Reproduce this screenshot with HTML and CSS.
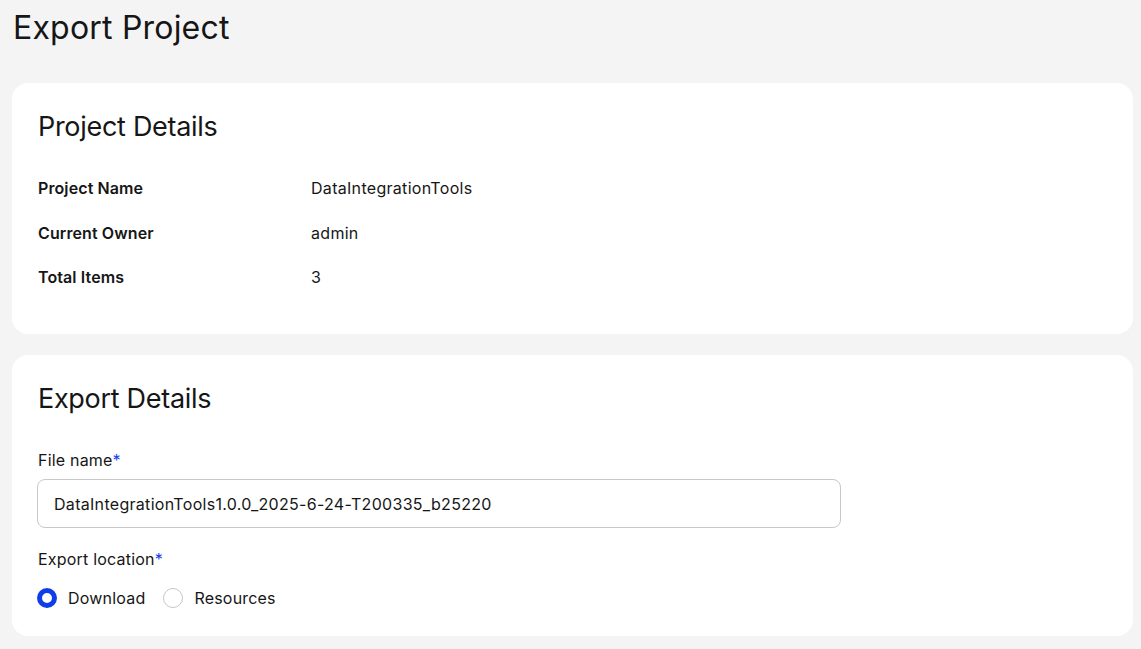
FILE: index.html
```html
<!DOCTYPE html>
<html>
<head>
<meta charset="utf-8">
<link rel="stylesheet" href="styles.css">
</head>
<body>
<div class="page">
  <h1 class="page-title">Export Project</h1>
  <section class="card">
    <h2 class="card-title">Project Details</h2>
    <div class="details">
      <div class="detail-row"><span class="detail-label">Project Name</span><span class="detail-value">DataIntegrationTools</span></div>
      <div class="detail-row"><span class="detail-label">Current Owner</span><span class="detail-value">admin</span></div>
      <div class="detail-row"><span class="detail-label">Total Items</span><span class="detail-value">3</span></div>
    </div>
  </section>
  <section class="card card-export">
    <h2 class="card-title">Export Details</h2>
    <div class="field">
      <label class="field-label">File name<span class="req">*</span></label>
      <div class="text-input">DataIntegrationTools1.0.0_2025-6-24-T200335_b25220</div>
    </div>
    <div class="field field-radio">
      <label class="field-label">Export location<span class="req">*</span></label>
      <div class="radio-group">
        <span class="radio"><span class="radio-dot checked"></span>Download</span>
        <span class="radio"><span class="radio-dot"></span>Resources</span>
      </div>
    </div>
  </section>
</div>
</body>
</html>
```

FILE: styles.css
```css
* { box-sizing: border-box; }
html, body { margin: 0; padding: 0; }
body {
  background: #f4f4f4;
  font-family: Inter, "Liberation Sans", Arial, sans-serif;
  color: #161616;
}
.page {
  padding: 8px 8px 0 12px;
  display: flex;
  flex-direction: column;
}
.page-title {
  margin: 0 0 0 1px;
  font-size: 32px;
  font-weight: 400;
  line-height: 40px;
  height: 75px;
  letter-spacing: 0.2px;
}
.card {
  background: #fff;
  border-radius: 16px;
  padding: 26px 26px 0 26px;
  height: 251px;
  margin-bottom: 21px;
}
.card-export { height: 281px; }
.card-title {
  margin: 0;
  font-size: 27px;
  font-weight: 400;
  line-height: 36px;
  letter-spacing: -0.3px;
}
.details {
  margin-top: 21px;
  display: flex;
  flex-direction: column;
}
.detail-row {
  display: flex;
  height: 44.5px;
  align-items: center;
  font-size: 16px;
  letter-spacing: 0.3px;
}
.detail-label {
  width: 273px;
  font-weight: 600;
  letter-spacing: 0.1px;
}
.field { margin-top: 33px; display: flex; flex-direction: column; }
.field-label { font-size: 16px; line-height: 20px; letter-spacing: 0.2px; }
.req { color: #0f3ee8; }
.text-input {
  margin-top: 9px;
  margin-left: -1px;
  width: 804px;
  height: 49px;
  border: 1px solid #c8c8c8;
  border-radius: 8px;
  padding: 0 16px;
  display: flex;
  align-items: center;
  font-size: 16px;
  letter-spacing: 0.3px;
}
.field-radio { margin-top: 21px; }
.radio-group {
  margin-top: 19px;
  margin-left: -1px;
  display: flex;
  gap: 18px;
  font-size: 16px;
  letter-spacing: 0.2px;
}
.radio {
  display: flex;
  align-items: center;
  gap: 11px;
}
.radio-dot {
  width: 20px;
  height: 20px;
  border-radius: 50%;
  border: 1px solid #c6c6c6;
  background: #fff;
}
.radio-dot.checked {
  border: 5px solid #0f3ee8;
}
```
